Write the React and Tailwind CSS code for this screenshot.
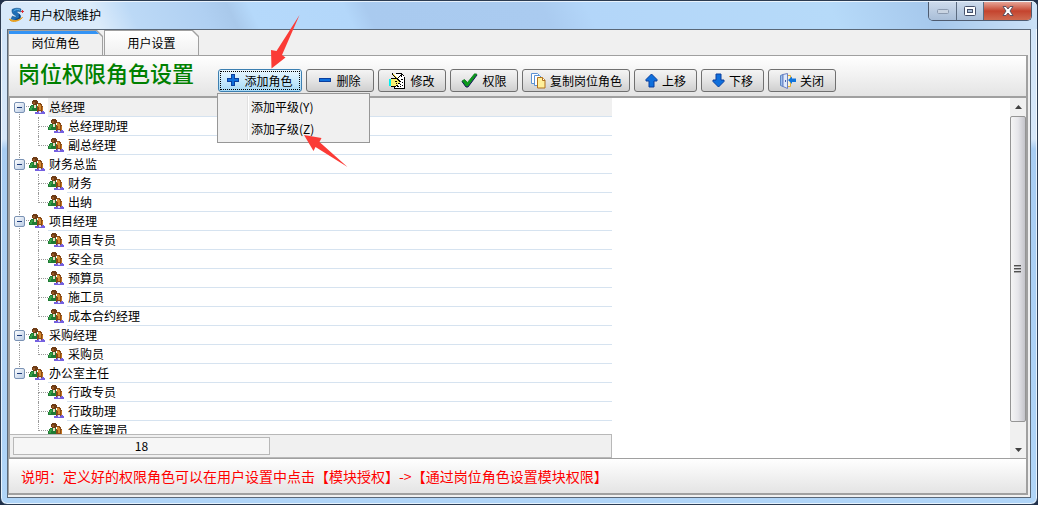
import { useState } from "react";

const roles = [
  { name: "总经理", children: ["总经理助理", "副总经理"] },
  { name: "财务总监", children: ["财务", "出纳"] },
  { name: "项目经理", children: ["项目专员", "安全员", "预算员", "施工员", "成本合约经理"] },
  { name: "采购经理", children: ["采购员"] },
  { name: "办公室主任", children: ["行政专员", "行政助理", "仓库管理员"] },
];

const DOT_L = "border-l border-dotted border-[#9a9a9a]";
const DOT_B = "border-b border-dotted border-[#9a9a9a]";

function LogoIcon() {
  return (
    <svg width="16" height="16" viewBox="0 0 16 16">
      <path d="M3 2.500C6 .8 9.500 1 12 2L11.500 5C9.500 4 8 4.200 7.800 5 7.700 6.300 12 6.500 11.600 10 11.200 13.500 6 14 2 12L3.500 9C5.500 10.300 7.200 10.300 7.200 9.300 7.200 8.200 3 7.800 3 4.500Z" fill="#1d6fb8" stroke="#17578f" strokeWidth=".6" />
      <path d="M4.500 4C6 2.300 9 2.300 11 3" fill="none" stroke="#5fb4ea" />
      <path d="M10 7.500C12 10 10 12.500 6.500 12.500" fill="none" stroke="#123f78" strokeWidth="1.400" />
      <path d="M.5 12C1 15.500 9 15.500 13.500 10.500 9 14 4 14.500 .5 12Z" fill="#f4a51c" stroke="#e8a01f" />
      <path d="M13.500 3v3M12 4.500h3" stroke="#d9333a" />
    </svg>
  );
}

function PeopleIcon() {
  return (
    <svg width="17" height="15" viewBox="0 0 17 15" shapeRendering="crispEdges">
      <path d="M4 0h4v1h1v3H8v1H4V4H3V1h1z" fill="#6e3c16" />
      <path d="M4 2h2v2H4z" fill="#9a5a24" />
      <path d="M2 5h6v1h1v5H0V8h1V6h1z" fill="#1f7a34" />
      <path d="M2 6h2v2H2zM1 8h2v2H1z" fill="#36a348" />
      <path d="M5 5h2v3H5z" fill="#e8dcc0" />
      <path d="M9 3h3v1h1v2h1v5h1v1H8V6h1z" fill="#8a4a14" />
      <path d="M9 4h2v1h1v5h-2V7H9z" fill="#d48a30" />
      <path d="M13 7h1v4h-1z" fill="#c27420" />
      <path d="M6 12h3v-1h2v1h2v-1h2v1h1v2H6z" fill="#7460e0" />
      <path d="M10 11h2v2h-2z" fill="#e4dcfa" />
    </svg>
  );
}

function PlusIcon() {
  return (
    <svg width="13" height="13" viewBox="0 0 13 13" shapeRendering="crispEdges">
      <path d="M4.500 .5h3v4h4v3h-4v4h-3v-4h-4v-3h4z" fill="#0f6fdc" stroke="#0a3f9e" />
    </svg>
  );
}

function MinusIcon() {
  return (
    <svg width="13" height="13" viewBox="0 0 13 13" shapeRendering="crispEdges">
      <path d="M.5 4.500h11v3H.5z" fill="#0f6fdc" stroke="#0a3f9e" />
    </svg>
  );
}

function EditIcon() {
  return (
    <svg width="17" height="16" viewBox="0 0 17 16" shapeRendering="crispEdges">
      <path d="M7 1h6l2 2v12H6V1z" fill="#fff" />
      <path d="M7 0h6v1H7zM13 1h1v1h-1zM14 2h1v1h-1zM12 1h1v3h3v11h-1V4h-3zM5 15h11v1H5zM5 12h1v3H5z" fill="#000" />
      <path d="M12 6h2v1h-2zM11 8h1v1h-1zM13 9h1v1h-1zM11 11h1v1h-1zM13 12h1v1h-1zM8 13h2v1H8zM11 13h1v1h-1z" fill="#000" />
      <path d="M0 6h2v7H0z" fill="#00f0f0" />
      <path d="M2 6h7v2h2v2H9v2H7v1H2z" fill="#f8f070" />
      <path d="M2 5h5v1H2zM9 7h2v1H9zM9 10h2v1H9zM7 12h2v1H7zM2 13h5v1H2zM6 8h2v1H6zM7 10h1v1H7z" fill="#000" />
      <path d="M3 0h1v1h1v1h1v1h1v1h1v1h1v1h1v1h1v2h-1V8H9V7H8V6H7V5H6V4H5V3H4V2H3z" fill="#000" />
      <path d="M4 1h1v1h1v1h1v1h1v1h1v1H8V5H7V4H6V3H5V2H4z" fill="#f0d830" />
      <path d="M10 3h1v1h-1zM9 4h1v1H9zM8 5h1v1H8zM11 2h1v1h-1z" fill="#000" />
    </svg>
  );
}

function CheckIcon() {
  return (
    <svg width="17" height="15" viewBox="0 0 17 15">
      <path d="M1 8l2.500-1.500L6.500 9.500 13.500 .8 16 1.200 7 13.500H5z" fill="#0a9a1c" stroke="#0a7a1c" strokeWidth=".8" />
      <path d="M1 8.500L5 14H7L16 2" fill="none" stroke="#14145c" />
    </svg>
  );
}

function CopyIcon() {
  return (
    <svg width="16" height="17" viewBox="0 0 16 17">
      <path d="M1.500 1.500h6l2 2v8h-8z" fill="#fff" stroke="#5b92d4" />
      <path d="M4.500 3.500h5l2 2v8h-7z" fill="#fff" stroke="#5b92d4" />
      <path d="M7.500 5.500h5l2.500 2.500v8H7.500z" fill="#fff09a" stroke="#b0701c" />
      <path d="M12.500 5.500v3H15" fill="#fff" stroke="#b0701c" />
    </svg>
  );
}

function UpIcon() {
  return (
    <svg width="13" height="15" viewBox="0 0 13 15">
      <path d="M6.500 1L12 6.500v1.500H9v6H4V8H1V6.500z" fill="#0f6fdc" stroke="#0a3f9e" />
    </svg>
  );
}

function DownIcon() {
  return (
    <svg width="13" height="15" viewBox="0 0 13 15">
      <path d="M6.500 14L12 8.500V7H9V1H4v6H1v1.500z" fill="#0f6fdc" stroke="#0a3f9e" />
    </svg>
  );
}

function ExitIcon() {
  return (
    <svg width="16" height="16" viewBox="0 0 16 16">
      <path d="M6.500 2.500h4v11h-4z" fill="#fdf3d0" stroke="#e0ae3c" />
      <path d="M.5 2.500L3 1.500v12l-2.500-1z" fill="#9fc1ee" stroke="#5f86c4" />
      <path d="M3 1.500L7.500 .5v15L3 13.500z" fill="#dfeafc" stroke="#6a7fc0" />
      <path d="M5.500 7v2" stroke="#4a62a8" />
      <path d="M8 7l4-3.500v2h4v3.500h-4v2z" fill="#0f74dc" />
    </svg>
  );
}

const tools = [
  { label: "删除", icon: <MinusIcon />, width: "w-[68px]" },
  { label: "修改", icon: <EditIcon />, width: "w-[68px]" },
  { label: "权限", icon: <CheckIcon />, width: "w-[68px]" },
  { label: "复制岗位角色", icon: <CopyIcon />, width: "w-[108px]" },
  { label: "上移", icon: <UpIcon />, width: "w-[63px]" },
  { label: "下移", icon: <DownIcon />, width: "w-[63px]" },
  { label: "关闭", icon: <ExitIcon />, width: "w-[68px]" },
];

function TitleBar() {
  const control =
    "flex h-[18px] items-center justify-center border-r border-[#5b6b80] bg-linear-to-b from-[#cddbec] via-[#bccde2] via-45% to-[#a9bed8]";
  return (
    <header className="flex h-7 items-start justify-between rounded-t-[6px] border-t border-white/70 bg-[linear-gradient(65deg,#d6e8fa_0px,#dcecfb_90px,#bcd9f6_125px,#b0d0f2_190px,#a9c9eb_215px,#b5d9fb_235px,#b3d7fa_320px,#a9caef_340px,#aacbf0_500px,#b3d6f9_540px,#b6daf9_760px,#a6c8ec_850px,#cfe4f8_100%)] pr-[5px] pl-[6px]">
      <div className="flex h-[26px] items-center gap-1 pl-0.5">
        <LogoIcon />
        <span className="text-xs">用户权限维护</span>
      </div>
      <div className="flex overflow-hidden rounded-b-[5px] border border-t-0 border-[#4e5b70]">
        <button aria-label="最小化" className={`${control} w-[28px]`}>
          <svg width="12" height="5" viewBox="0 0 12 5">
            <rect x=".5" y=".5" width="11" height="4" rx="1" fill="#c9d4e2" stroke="#8c9bb0" />
          </svg>
        </button>
        <button aria-label="最大化" className={`${control} w-[27px]`}>
          <svg width="12" height="10" viewBox="0 0 12 10">
            <rect x=".5" y=".5" width="11" height="9" rx="1" fill="#fff" stroke="#45506a" />
            <rect x="3.500" y="3.500" width="5" height="3" fill="#a9bed8" stroke="#45506a" />
          </svg>
        </button>
        <button
          aria-label="关闭窗口"
          className="flex h-[18px] w-[47px] items-center justify-center bg-linear-to-b from-[#e5a497] via-[#c4432e] via-50% to-[#cf6a50]"
        >
          <svg width="12" height="10" viewBox="0 0 12 10">
            <path d="M1 .5h3L6 3 8 .5h3L8 5l3 4.500H8L6 7 4 9.500H1L4 5z" fill="#fff" stroke="#4f4a5c" strokeWidth=".9" />
          </svg>
        </button>
      </div>
    </header>
  );
}

function Tabs({ active, onChange }) {
  const cut = "[clip-path:polygon(0_0,calc(100%-6px)_0,100%_6px,100%_100%,0_100%)]";
  return (
    <div role="tablist" className="flex h-[26px] gap-px border-b border-[#a0a0a0] bg-[#f0f0f0]">
      {["岗位角色", "用户设置"].map((name, i) => (
        <button
          key={name}
          role="tab"
          aria-selected={active === i}
          onClick={() => onChange(i)}
          className={`w-[95px] bg-[#a0a0a0] px-px pt-px text-xs ${cut}`}
        >
          <span
            className={`flex h-full items-center justify-center ${cut} ${
              active === i
                ? "border-t-[3px] border-[#3393f5] bg-[#f0f0f0] pb-[3px]"
                : "bg-linear-to-b from-white to-[#f0f0f0]"
            }`}
          >
            {name}
          </span>
        </button>
      ))}
    </div>
  );
}

function AddMenu() {
  return (
    <div
      role="menu"
      className="absolute top-6 -left-px z-10 flex h-[50px] w-[153px] border border-[#979797] bg-[#f0f0f0] p-[2px]"
    >
      <div className="w-7 border-r border-[#e0e0e0]" />
      <div className="flex flex-1 flex-col border-l border-white">
        {["添加平级(Y)", "添加子级(Z)"].map((item) => (
          <button key={item} role="menuitem" className="h-[22px] pl-0.5 text-left text-xs hover:bg-[#dcebfa]">
            {item}
          </button>
        ))}
      </div>
      <svg className="absolute top-9 left-20" width="56" height="42" viewBox="0 0 56 42">
        <path d="M6 5L23.500 8 21.500 12 49.500 37 17.500 17 15.500 21z" fill="#fb3b36" />
      </svg>
    </div>
  );
}

function Toolbar() {
  const [open, setOpen] = useState(true);
  return (
    <div className="flex h-[42px] items-start border-b-2 border-[#a0a0a0] bg-linear-to-b from-white to-[#e4e4e4]">
      <h1 className="w-[209px] shrink-0 pl-[9px] text-[22px] leading-[32px] font-medium whitespace-nowrap text-[#008000]">
        岗位权限角色设置
      </h1>
      <div className="flex gap-1 pt-[13px]">
        <div className="relative">
          <button
            aria-haspopup="menu"
            aria-expanded={open}
            onClick={() => setOpen(!open)}
            className="block h-[23px] w-[84px] rounded-[3px] border border-[#3c7fb1] bg-linear-to-b from-[#eaf6fd] via-[#c8e9fc] to-[#a7d9f5] p-px text-xs"
          >
            <span className="flex h-full items-center justify-center gap-1 border border-dotted border-black">
              <PlusIcon />
              添加角色
            </span>
          </button>
          {open && <AddMenu />}
          <svg className="pointer-events-none absolute -top-14 left-12" width="38" height="58" viewBox="0 0 38 58">
            <path d="M33.500 2L10.500 38 5 37 5.500 55.500 19.500 44.500 16 42z" fill="#fb3b36" />
          </svg>
        </div>
        {tools.map((tool) => (
          <button
            key={tool.label}
            className={`flex h-[23px] items-center justify-center gap-1 rounded-[3px] border border-[#707070] bg-linear-to-b from-[#f4f4f4] via-[#e4e4e4] to-[#cfcfcf] text-xs whitespace-nowrap ${tool.width}`}
          >
            {tool.icon}
            {tool.label}
          </button>
        ))}
      </div>
    </div>
  );
}

function RootRow({ name, first, last, open, selected, onToggle }) {
  return (
    <div className="flex h-[19px]">
      <span className="grid w-[19px] grid-cols-[9px_10px] grid-rows-[9px_10px]">
        <span className={`col-start-2 row-start-1 ${DOT_B} ${first ? "" : "border-l"}`} />
        <span className={`col-start-2 row-start-2 ${last ? "" : DOT_L}`} />
        <button
          aria-label={open ? "折叠" : "展开"}
          onClick={onToggle}
          className="col-span-2 col-start-1 row-span-2 row-start-1 flex size-[11px] items-center justify-center place-self-center rounded-[2px] border border-[#7a92b4] bg-linear-to-br from-white to-[#b9cbe4]"
        >
          <svg width="7" height="7" viewBox="0 0 7 7" shapeRendering="crispEdges">
            <path d={open ? "M1 3h5v1H1z" : "M1 3h2V1h1v2h2v1H4v2H3V4H1z"} fill="#1c3a78" />
          </svg>
        </button>
      </span>
      <span className="flex w-[19px] items-center">
        <PeopleIcon />
      </span>
      <span
        className={`flex-1 border-b border-[#d6e3f0] pl-px leading-[17px] ${selected ? "bg-[#f0f0f0]" : ""}`}
      >
        {name}
      </span>
    </div>
  );
}

function ChildRow({ name, lastRoot, lastChild }) {
  return (
    <div className="flex h-[19px]">
      <span className="grid w-[19px] grid-cols-[9px_10px]">
        <span className={`col-start-2 ${lastRoot ? "" : DOT_L}`} />
      </span>
      <span className="grid w-[19px] grid-cols-[9px_10px] grid-rows-[10px_9px]">
        <span className={`col-start-2 row-start-1 border-l ${DOT_B}`} />
        <span className={`col-start-2 row-start-2 ${lastChild ? "" : DOT_L}`} />
      </span>
      <span className="flex w-[19px] items-center">
        <PeopleIcon />
      </span>
      <span className="flex-1 border-b border-[#d6e3f0] pl-px leading-[17px]">{name}</span>
    </div>
  );
}

function RoleTree() {
  const [closed, setClosed] = useState([]);
  const total = roles.reduce((sum, role) => sum + 1 + role.children.length, 0);

  const toggle = (name) =>
    setClosed((prev) => (prev.includes(name) ? prev.filter((n) => n !== name) : [...prev, name]));

  return (
    <section className="flex w-[602px] flex-col text-xs">
      <div className="min-h-0 flex-1 basis-0 overflow-hidden">
        {roles.map((role, i) => {
          const last = i === roles.length - 1;
          const open = !closed.includes(role.name);
          return (
            <div key={role.name}>
              <RootRow
                name={role.name}
                first={i === 0}
                last={last}
                open={open}
                selected={i === 0}
                onToggle={() => toggle(role.name)}
              />
              {open &&
                role.children.map((child, j) => (
                  <ChildRow
                    key={child}
                    name={child}
                    lastRoot={last}
                    lastChild={j === role.children.length - 1}
                  />
                ))}
            </div>
          );
        })}
      </div>
      <footer className="h-6 border border-l-0 border-[#b8b8b8] bg-[#f0f0f0] px-[3px] py-[2px]">
        <div className="flex h-[18px] w-[257px] items-center justify-center border border-[#b8b8b8] bg-[#f6f6f6]">
          {total}
        </div>
      </footer>
    </section>
  );
}

function ScrollBar() {
  return (
    <div className="flex w-4 flex-col bg-[#f0f0f0]">
      <button aria-label="向上滚动" className="flex h-[18px] items-center justify-center">
        <svg width="7" height="4" viewBox="0 0 7 4">
          <path d="M0 4L3.500 0 7 4z" fill="#404040" />
        </svg>
      </button>
      <div className="flex flex-1 items-center justify-center rounded-[2px] border border-[#959595] bg-linear-to-r from-[#f5f5f5] via-[#e6e6ea] to-[#c4c4ca]">
        <svg width="8" height="8" viewBox="0 0 8 8" shapeRendering="crispEdges">
          <path d="M0 0h7v1H0zM0 3h7v1H0zM0 6h7v1H0z" fill="#505050" />
          <path d="M0 1h7v1H0zM0 4h7v1H0zM0 7h7v1H0z" fill="#a8a8a8" />
        </svg>
      </div>
      <div className="h-5" />
      <button aria-label="向下滚动" className="flex h-4 items-center justify-center">
        <svg width="7" height="4" viewBox="0 0 7 4">
          <path d="M0 0L3.500 4 7 0z" fill="#404040" />
        </svg>
      </button>
    </div>
  );
}

export default function App() {
  const [tab, setTab] = useState(0);

  return (
    <div className="h-screen bg-[#20304a] font-['Noto_Sans_CJK_SC',sans-serif] text-black">
      <div className="flex h-full flex-col rounded-[7px] border border-[#2c3c52] bg-[linear-gradient(180deg,#d0e4f9_0px,#d6e7f9_138px,#a8cdf3_148px,#b0d5f8_100%)] inset-ring inset-ring-white/70">
        <TitleBar />
        <main className="mx-[6px] mb-[6px] flex min-h-0 flex-1 flex-col border border-[#5a6878] bg-[#f0f0f0] pr-0.5 pb-0.5">
          <Tabs active={tab} onChange={setTab} />
          <div className="flex min-h-0 flex-1 flex-col border-r-2 border-b-2 border-l border-[#a0a0a0]">
            <Toolbar />
            <div className="flex min-h-0 flex-1 justify-between border-l border-[#a0a0a0] bg-white">
              <RoleTree />
              <ScrollBar />
            </div>
            <p className="h-[35px] border-t border-[#a0a0a0] bg-linear-to-b from-white to-[#e4e4e4] pl-3 text-sm leading-[34px] text-[#ff0000]">
              说明：定义好的权限角色可以在用户设置中点击【模块授权】-&gt;【通过岗位角色设置模块权限】
            </p>
          </div>
        </main>
      </div>
    </div>
  );
}
